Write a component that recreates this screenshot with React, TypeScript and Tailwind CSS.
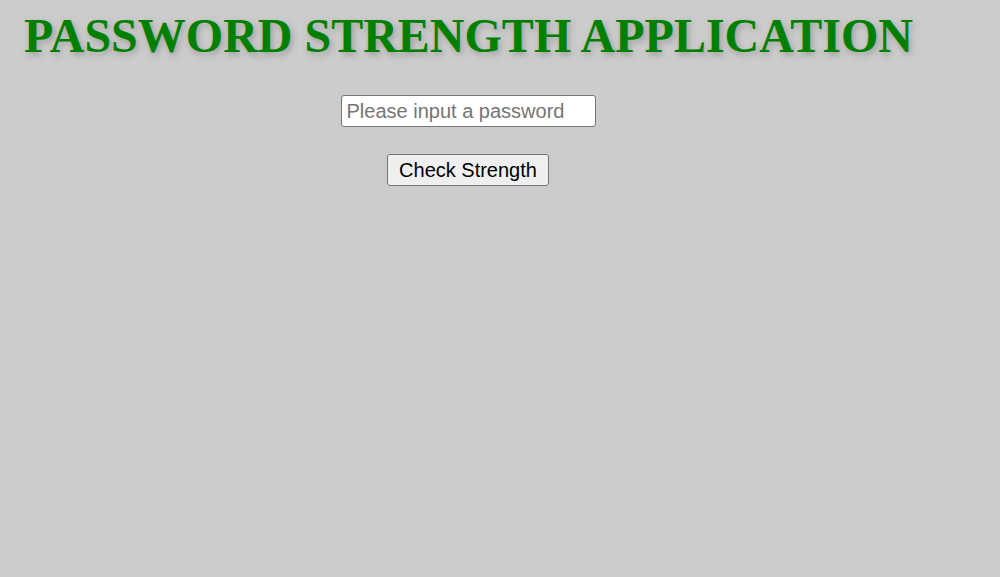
import { useState } from 'react'

export default function App() {
  const [password, setPassword] = useState('')

  return (
    <div className="min-h-[577px] w-full bg-[#cccccc] font-['Liberation_Sans',Arial,sans-serif]">
      <h1 className="pl-6 pt-[10px] font-['Liberation_Serif','Times_New_Roman',serif] text-[48px] font-bold leading-[52px] text-[#008000] [text-shadow:2px_3px_6px_rgba(110,110,110,0.5)]">
        PASSWORD STRENGTH APPLICATION
      </h1>
      <div className="flex w-[936px] flex-col items-center pt-[33px]">
        <input
          type="password"
          value={password}
          onChange={(e) => setPassword(e.target.value)}
          placeholder="Please input a password"
          className="h-[32px] w-[255px] rounded-[3px] border border-[#767676] bg-white px-[5px] text-[20px] text-black placeholder:text-[#757575] outline-none"
        />
        <button className="mt-[27px] h-[32px] w-[162px] rounded-[3px] border border-[#767676] bg-[#efefef] text-[20px] text-black">
          Check Strength
        </button>
      </div>
    </div>
  )
}
